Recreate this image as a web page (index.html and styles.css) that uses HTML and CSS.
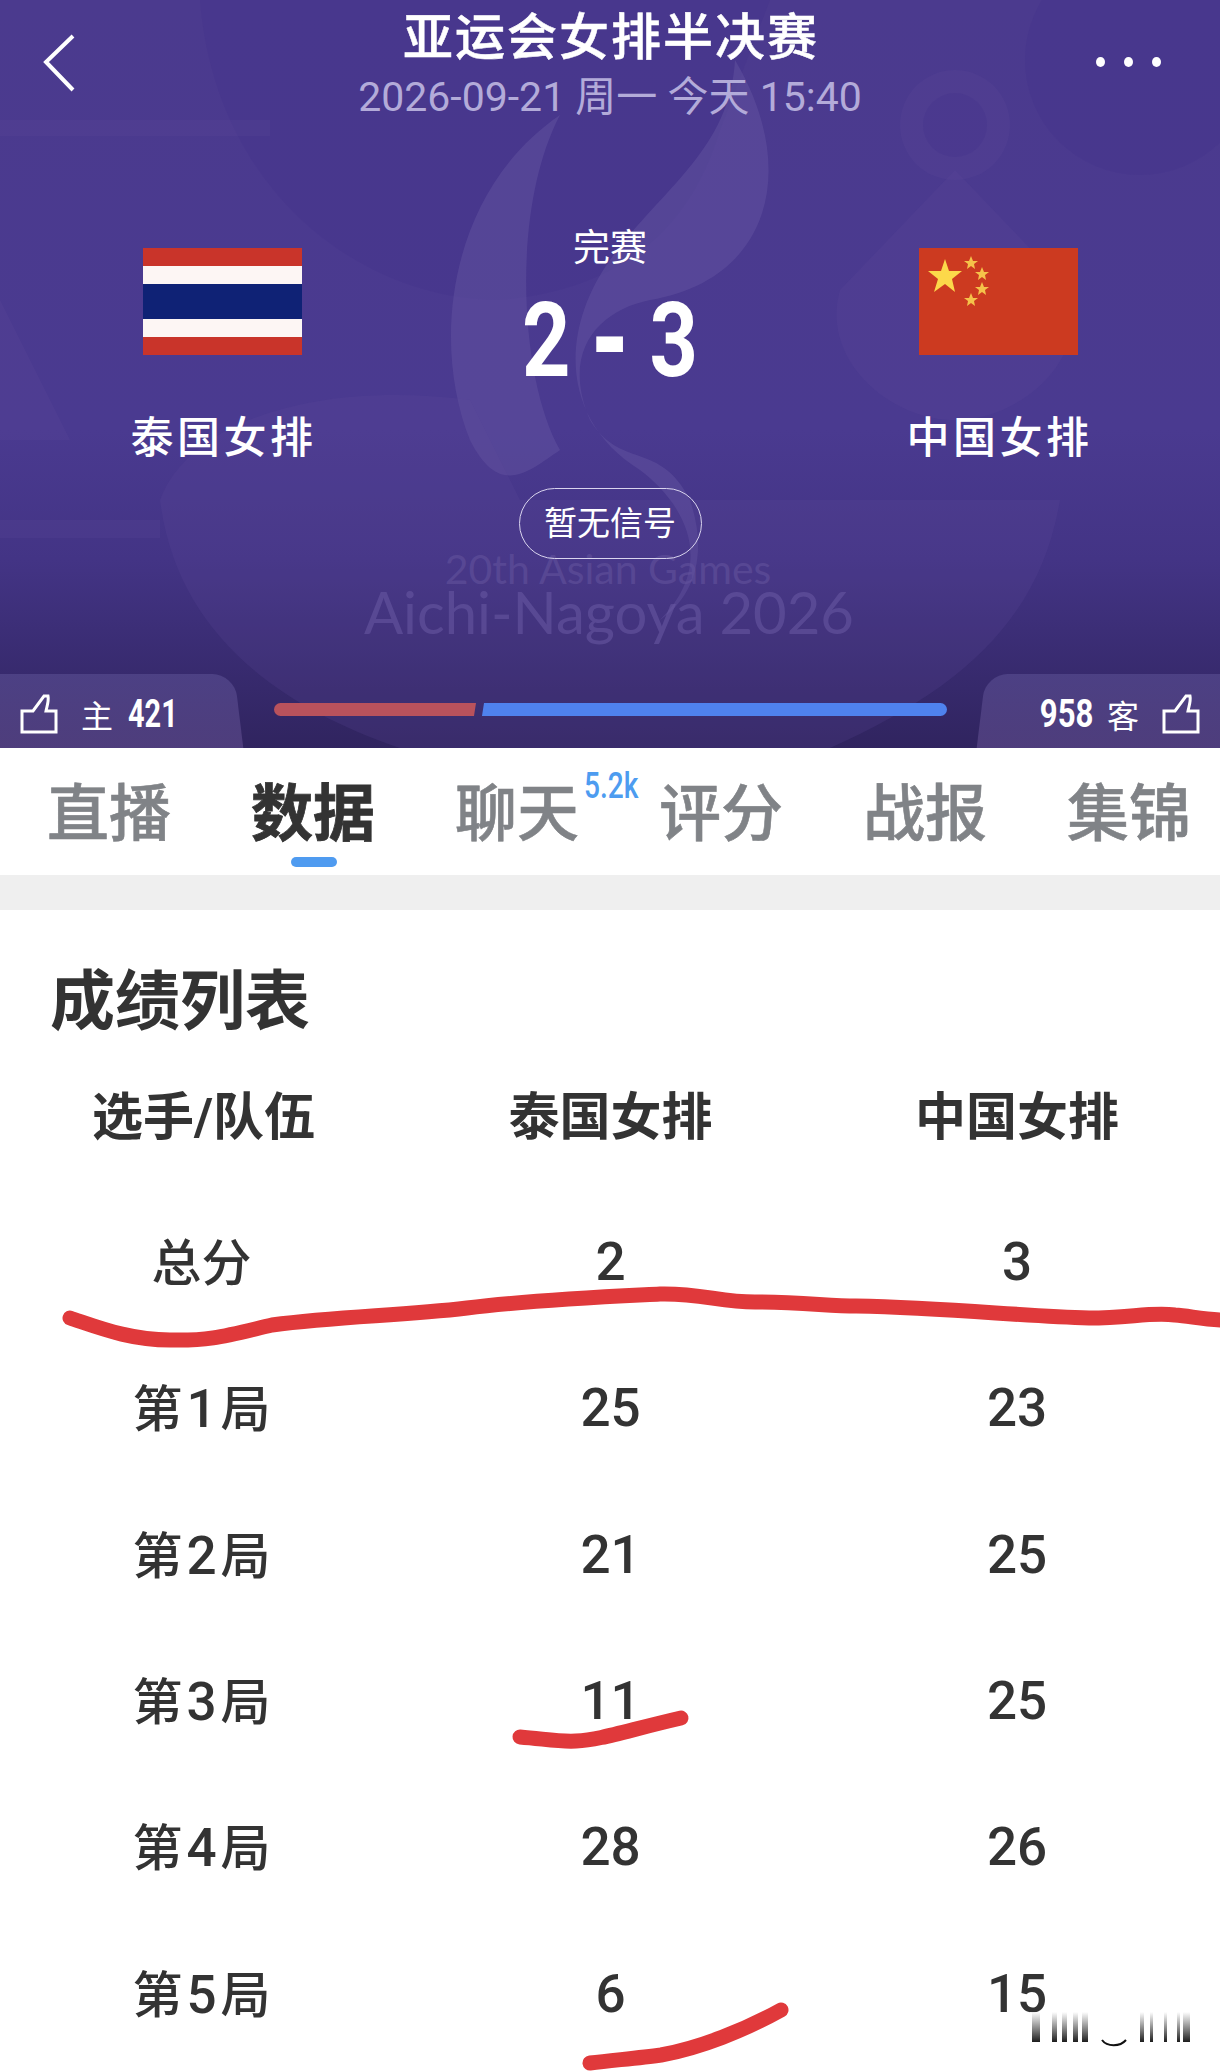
FILE: index.html
```html
<!DOCTYPE html>
<html lang="zh">
<head>
    <meta charset="UTF-8">
    <meta name="viewport" content="width=device-width, initial-scale=1.0">
    <title>亚运会女排半决赛</title>
    <link rel="stylesheet" href="styles.css">
</head>
<body>

<div class="page">

    <!-- Match header -->
    <div class="hero">
        <svg class="hero-art" viewBox="0 0 1220 748" aria-hidden="true">
            <path class="art-dark" d="M200 0 C215 190 360 300 500 300 C620 290 690 230 720 130 L770 0 Z"/>
            <path class="art-light" d="M735 60 C800 170 770 280 650 300 C600 310 560 350 590 420 C620 470 660 440 690 500 C710 560 690 600 660 620 C720 560 680 500 640 470 C560 420 560 330 610 260 C660 190 730 150 735 60 Z"/>
            <path class="art-light" d="M560 115 C450 190 430 340 470 440 C500 500 530 470 560 450 C520 380 510 210 560 115 Z"/>
            <circle class="art-dark" cx="1140" cy="60" r="115"/>
            <circle class="art-soft" cx="955" cy="125" r="55"/>
            <circle class="art-dark" cx="955" cy="125" r="32"/>
            <path class="art-soft" d="M840 290 L955 170 L1070 290 C1090 360 1020 420 955 420 C890 420 820 360 840 290 Z"/>
            <path class="art-soft" d="M160 500 C175 620 260 700 400 748 L830 748 C960 690 1040 620 1060 500 Z"/>
            <path class="art-soft" d="M160 500 C190 420 320 380 470 400 L520 500 Z"/>
            <rect class="art-soft" x="0" y="120" width="270" height="16"/>
            <rect class="art-soft" x="0" y="520" width="160" height="18"/>
            <path class="art-soft" d="M0 300 L70 440 L0 440 Z"/>
            <text class="art-small" x="608" y="584" text-anchor="middle">20th Asian Games</text>
            <text class="art-big" x="609" y="634" text-anchor="middle">Aichi-Nagoya 2026</text>
        </svg>

        <div class="topbar">
            <svg class="back-icon" viewBox="0 0 34 60"><path d="M31 3 L4 29 L31 57"/></svg>
            <div class="top-title">
                <div class="game-name">亚运会女排半决赛</div>
                <div class="game-date">2026-09-21 周一 今天 15:40</div>
            </div>
            <div class="more-dots"><span></span><span></span><span></span></div>
        </div>

        <div class="match">
            <div class="team">
                <svg class="flag" viewBox="0 0 159 107">
                    <rect width="159" height="107" fill="#c9342a"/>
                    <rect y="18" width="159" height="71" fill="#fdf6f4"/>
                    <rect y="36" width="159" height="35" fill="#0f2275"/>
                </svg>
                <div class="team-name">泰国女排</div>
            </div>
            <div class="score-box">
                <div class="status">完赛</div>
                <div class="score">2<span class="score-dash">-</span>3</div>
            </div>
            <div class="team">
                <svg class="flag" viewBox="0 0 159 107">
                    <rect width="159" height="107" fill="#cc3a20"/>
                    <polygon fill="#fcd84a" points="26,11 30,23 43,23 33,31 36,44 26,36 15,44 19,31 9,23 22,23"/>
                    <polygon fill="#f5c24a" points="52,8 54,13 59,13 55,16 56,21 52,18 48,21 49,16 45,13 50,13"/>
                    <polygon fill="#f5c24a" points="63,19 65,24 70,24 66,27 67,32 63,29 59,32 60,27 56,24 61,24"/>
                    <polygon fill="#f5c24a" points="63,34 65,39 70,39 66,42 67,47 63,44 59,47 60,42 56,39 61,39"/>
                    <polygon fill="#f5c24a" points="52,45 54,50 59,50 55,53 56,58 52,55 48,58 49,53 45,50 50,50"/>
                </svg>
                <div class="team-name">中国女排</div>
            </div>
        </div>

        <div class="signal">暂无信号</div>

        <div class="votes">
            <div class="vote vote-home">
                <svg class="thumb" viewBox="0 0 38 40"><path d="M2 17 H13 L24 2 H28 C29 7 27 12 26 17 H36 V38 H2 Z"/></svg>
                <span class="vote-side">主</span>
                <span class="vote-num">421</span>
            </div>
            <div class="vote-bar">
                <div class="bar-home"></div>
                <div class="bar-away"></div>
            </div>
            <div class="vote vote-away">
                <span class="vote-num">958</span>
                <span class="vote-side">客</span>
                <svg class="thumb" viewBox="0 0 38 40"><path d="M2 17 H13 L24 2 H28 C29 7 27 12 26 17 H36 V38 H2 Z"/></svg>
            </div>
        </div>
    </div>

    <!-- Tabs -->
    <div class="tabs">
        <div class="tab">直播</div>
        <div class="tab active">数据</div>
        <div class="tab">聊天<span class="tab-badge">5.2k</span></div>
        <div class="tab">评分</div>
        <div class="tab">战报</div>
        <div class="tab">集锦</div>
    </div>
    <div class="band"></div>

    <!-- Score table -->
    <div class="results">
        <h2 class="results-title">成绩列表</h2>
        <div class="row row-head"><div>选手/队伍</div><div>泰国女排</div><div>中国女排</div></div>
        <div class="row"><div>总分</div><div>2</div><div>3</div></div>
        <div class="row"><div>第<span class="set-no">1</span>局</div><div>25</div><div>23</div></div>
        <div class="row"><div>第<span class="set-no">2</span>局</div><div>21</div><div>25</div></div>
        <div class="row"><div>第<span class="set-no">3</span>局</div><div>11</div><div>25</div></div>
        <div class="row"><div>第<span class="set-no">4</span>局</div><div>28</div><div>26</div></div>
        <div class="row"><div>第<span class="set-no">5</span>局</div><div>6</div><div>15</div></div>
    </div>

    <!-- Red pen marks and the image watermark lie over the table -->
    <svg class="overlay" viewBox="0 0 1220 2072" aria-hidden="true">
        <defs>
            <linearGradient id="fade" x1="0" y1="0" x2="0" y2="1">
                <stop offset="0" stop-color="#222" stop-opacity="0"/>
                <stop offset="1" stop-color="#111" stop-opacity="0.95"/>
            </linearGradient>
        </defs>
        <path class="pen" d="M70 1318 C100 1328 130 1340 170 1340 C210 1341 225 1336 272 1325 C340 1316 400 1316 467 1308 C530 1300 600 1297 660 1294 C700 1293 720 1302 755 1302 C800 1302 830 1306 856 1306 C950 1308 1020 1316 1089 1318 C1130 1318 1150 1312 1175 1315 C1190 1316 1205 1320 1225 1320"/>
        <path class="pen" d="M520 1737 C545 1739 560 1742 576 1741 C600 1740 625 1731 681 1718"/>
        <path class="pen" d="M590 2063 C615 2060 640 2058 661 2055 C700 2048 745 2030 781 2010"/>
        <rect x="1030" y="2012" width="164" height="32" fill="#fff" opacity="0.85"/>
        <g fill="url(#fade)">
            <rect x="1032" y="2012" width="8" height="30"/>
            <rect x="1052" y="2012" width="5" height="30"/>
            <rect x="1062" y="2012" width="5" height="30"/>
            <rect x="1073" y="2012" width="5" height="30"/>
            <rect x="1082" y="2012" width="6" height="30"/>
            <rect x="1140" y="2012" width="4" height="30"/>
            <rect x="1150" y="2012" width="3" height="30"/>
            <rect x="1164" y="2012" width="3" height="30"/>
            <rect x="1177" y="2012" width="3" height="30"/>
            <rect x="1183" y="2012" width="7" height="30"/>
        </g>
        <path class="wm-cup" d="M1102 2040 C1107 2047 1120 2047 1126 2040"/>
    </svg>

</div>

</body>
</html>
```

FILE: styles.css
```css
* {
    box-sizing: border-box;
}
body {
    margin: 0;
    background-color: #fff;
    font-family: Roboto, "Noto Sans CJK SC", sans-serif;
}
.page {
    position: relative;
    width: 1220px;
    height: 2072px;
    overflow: hidden;
}

/* Hero */
.hero {
    position: relative;
    height: 748px;
    color: #fff;
    background: linear-gradient(#4b3a8e 0, #4a3a90 430px, #433485 560px, #30245f 748px);
}
.hero-art {
    position: absolute;
    left: 0;
    top: 0;
    width: 1220px;
    height: 748px;
}
.art-dark {
    fill: #43328a;
    opacity: 0.3;
}
.art-light {
    fill: #6a5aa6;
    opacity: 0.4;
}
.art-soft {
    fill: #5d4a9c;
    opacity: 0.2;
}
.art-small {
    font-size: 41px;
    fill: #65559e;
    opacity: 0.55;
    font-family: Lato, sans-serif;
}
.art-big {
    font-size: 58px;
    fill: #6a5aa4;
    opacity: 0.55;
    font-family: Lato, sans-serif;
}
.topbar,
.match,
.signal,
.votes {
    position: relative;
}
.topbar {
    height: 128px;
    display: grid;
    grid-template-columns: 200px 1fr 200px;
}
.back-icon {
    width: 34px;
    height: 60px;
    margin: 33px 0 0 42px;
    fill: none;
    stroke: #fff;
    stroke-width: 4;
}
.top-title {
    text-align: center;
    padding-top: 4px;
}
.game-name {
    font-size: 50px;
    line-height: 58px;
    letter-spacing: 2px;
    text-indent: 2px;
    font-weight: 500;
    font-family: "Noto Sans CJK SC", sans-serif;
    -webkit-text-stroke: 0.5px #fff;
}
.game-date {
    font-size: 41px;
    line-height: 44px;
    margin-top: 13px;
    color: #b3abd9;
    font-family: Roboto, "Noto Sans CJK SC", sans-serif;
}
.more-dots {
    display: flex;
    gap: 19px;
    justify-content: flex-end;
    padding: 57px 59px 0 0;
}
.more-dots span {
    width: 9px;
    height: 10px;
    border-radius: 50%;
    background-color: #fff;
}
.match {
    display: grid;
    grid-template-columns: 444px 332px 444px;
    height: 348px;
}
.team {
    display: flex;
    flex-direction: column;
    align-items: center;
    padding-top: 120px;
}
.flag {
    width: 159px;
    height: 107px;
}
.team-name {
    margin-top: 54px;
    font-size: 43px;
    line-height: 50px;
    letter-spacing: 3.5px;
    text-indent: 3px;
    font-family: "Noto Sans CJK SC", sans-serif;
    font-weight: 500;
}
.score-box {
    text-align: center;
    padding-top: 98px;
}
.status {
    font-size: 37px;
    line-height: 46px;
}
.score {
    margin-top: 29px;
    display: flex;
    justify-content: center;
    gap: 28px;
    font-size: 103px;
    line-height: 80px;
    font-weight: 700;
    transform: scaleX(0.82);
}
.score-dash {
    -webkit-text-stroke: 4px #fff;
}
.signal {
    width: 183px;
    height: 71px;
    margin: 12px auto 0;
    border: 1px solid #d9d4ee;
    border-radius: 36px;
    text-align: center;
    font-size: 33px;
    line-height: 69px;
}
.votes {
    position: absolute;
    left: 0;
    right: 0;
    bottom: 0;
    height: 74px;
    display: flex;
    justify-content: space-between;
    overflow: hidden;
}
.vote {
    position: relative;
    width: 240px;
    display: flex;
    align-items: center;
    gap: 23px;
    padding-top: 6px;
}
.vote::before {
    content: "";
    position: absolute;
    top: 0;
    bottom: -20px;
    width: 260px;
    background: linear-gradient(#504488, #54417f);
    opacity: 0.85;
    border-radius: 0 22px 0 0;
}
.vote > * {
    position: relative;
}
.vote-home {
    padding-left: 20px;
}
.vote-home::before {
    left: -20px;
    transform: skewX(7deg);
}
.vote-away {
    justify-content: flex-end;
    padding-right: 20px;
}
.vote-away::before {
    right: -20px;
    border-radius: 22px 0 0 0;
    transform: skewX(-7deg);
}
.thumb {
    width: 38px;
    height: 40px;
    fill: none;
    stroke: #fff;
    stroke-width: 3;
}
.vote-side {
    font-size: 32px;
    font-family: "Noto Sans CJK SC", sans-serif;
}
.vote-num {
    font-size: 38px;
    font-weight: 700;
    margin-left: -8px;
    transform: scaleX(0.76);
    transform-origin: left center;
}
.vote-away .vote-num {
    margin: 0 -9px 0 0;
    transform: scaleX(0.82);
    transform-origin: right center;
}
.vote-bar {
    position: absolute;
    left: 274px;
    top: 29px;
    width: 673px;
    height: 13px;
    display: flex;
    gap: 6px;
}
.bar-home {
    width: 202px;
    background-color: #b9525c;
    border-radius: 7px 0 0 7px;
    clip-path: polygon(0 0, 100% 0, 99% 100%, 0 100%);
}
.bar-away {
    flex: 1;
    background-color: #4f82ee;
    border-radius: 0 7px 7px 0;
    clip-path: polygon(2px 0, 100% 0, 100% 100%, 0 100%);
}

/* Tabs */
.tabs {
    height: 127px;
    display: flex;
    padding-left: 7px;
    font-family: "Noto Sans CJK SC", sans-serif;
}
.tab {
    position: relative;
    flex: none;
    width: 204px;
    padding-top: 22px;
    text-align: center;
    font-size: 62px;
    line-height: 78px;
    font-weight: 500;
    color: #808387;
    -webkit-text-stroke: 0.6px #808387;
}
.tab.active {
    color: #333;
    font-weight: 700;
    -webkit-text-stroke: 0.8px #333;
}
.tab.active::after {
    content: "";
    position: absolute;
    left: 80px;
    top: 109px;
    width: 46px;
    height: 10px;
    border-radius: 5px;
    background-color: #4f9bf0;
}
.tab-badge {
    position: absolute;
    left: 169px;
    top: 18px;
    font-size: 36px;
    line-height: 40px;
    font-weight: 500;
    color: #4d9cf0;
    font-family: Roboto, sans-serif;
    -webkit-text-stroke: 0;
    transform: scaleX(0.78);
    transform-origin: left center;
}
.band {
    height: 35px;
    background-color: #efefef;
}

/* Results table */
.results {
    color: #333;
    padding-top: 50px;
}
.results-title {
    margin: 0 0 0 50px;
    font-size: 65px;
    line-height: 72px;
    font-weight: 700;
    font-family: "Noto Sans CJK SC", sans-serif;
}
.row {
    display: grid;
    grid-template-columns: 407px 407px 406px;
    height: 146.3px;
    align-items: center;
    text-align: center;
    font-size: 53px;
    font-weight: 500;
}
.row > div {
    padding-top: 4px;
}
.row > div:first-child {
    font-size: 50px;
    padding: 0 4px 2px 0;
}
.set-no {
    font-size: 53px;
    margin: 0 4px;
}
.row-head {
    height: 117px;
    margin: 22px 0 16px;
    font-weight: 700;
}
.row-head > div,
.row-head > div:first-child {
    font-size: 51px;
    padding: 0;
}
.overlay {
    position: absolute;
    left: 0;
    top: 0;
    width: 1220px;
    height: 2072px;
}
.pen {
    fill: none;
    stroke: #e0393b;
    stroke-width: 15;
    stroke-linecap: round;
    stroke-linejoin: round;
}
.wm-cup {
    fill: none;
    stroke: #111;
    stroke-width: 2;
}
```
